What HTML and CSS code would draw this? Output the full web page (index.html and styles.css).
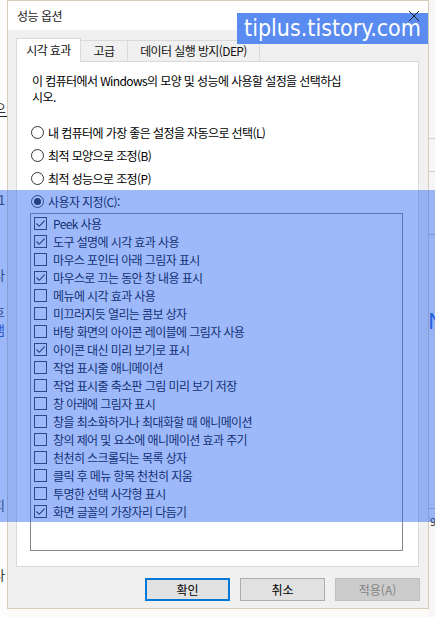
FILE: index.html
```html
<!DOCTYPE html>
<html lang="ko">
<head>
    <meta charset="UTF-8">
    <title>성능 옵션</title>
    <link rel="stylesheet" href="styles.css">
</head>
<body>
    <div class="desk">
        <!-- window behind the dialog, only its edges show -->
        <div class="back back-left">
            <span class="frag frag-a">으</span>
            <span class="frag frag-b">1</span>
            <span class="frag frag-c">사</span>
            <span class="frag frag-d">호</span>
            <span class="frag frag-e">램</span>
            <span class="frag frag-f">지</span>
            <span class="frag frag-g">사</span>
        </div>
        <div class="back back-right">
            <span class="frag frag-n">N</span>
            <span class="frag frag-q">'9</span>
        </div>

        <div class="dialog">
            <div class="titlebar">
                <span class="title">성능 옵션</span>
                <svg class="close" width="12" height="12" viewBox="0 0 12 12">
                    <path d="M1 1 L11 11 M11 1 L1 11" stroke="#222" stroke-width="1" fill="none"/>
                </svg>
            </div>
            <div class="body">
                <div class="tabs">
                    <div class="tab active">시각 효과</div>
                    <div class="tab tab-adv">고급</div>
                    <div class="tab tab-dep">데이터 실행 방지(DEP)</div>
                </div>
                <div class="panel">
                    <p class="desc">이 컴퓨터에서 Windows의 모양 및 성능에 사용할 설정을 선택하십<br>시오.</p>
                    <div class="radios">
                        <div class="radio"><span class="dot"></span>내 컴퓨터에 가장 좋은 설정을 자동으로 선택(L)</div>
                        <div class="radio"><span class="dot"></span>최적 모양으로 조정(B)</div>
                        <div class="radio"><span class="dot"></span>최적 성능으로 조정(P)</div>
                        <div class="radio on"><span class="dot"></span>사용자 지정(C):</div>
                    </div>
                    <div class="listbox" id="list"></div>
                </div>
                <div class="buttons">
                    <button class="btn default">확인</button>
                    <button class="btn">취소</button>
                    <button class="btn disabled">적용(A)</button>
                </div>
            </div>
        </div>

        <div class="watermark">tiplus.tistory.com</div>
        <div class="highlight"></div>
    </div>
    <script>
        const items = [
            ['Peek 사용', true],
            ['도구 설명에 시각 효과 사용', true],
            ['마우스 포인터 아래 그림자 표시', false],
            ['마우스로 끄는 동안 창 내용 표시', true],
            ['메뉴에 시각 효과 사용', false],
            ['미끄러지듯 열리는 콤보 상자', false],
            ['바탕 화면의 아이콘 레이블에 그림자 사용', false],
            ['아이콘 대신 미리 보기로 표시', true],
            ['작업 표시줄 애니메이션', false],
            ['작업 표시줄 축소판 그림 미리 보기 저장', false],
            ['창 아래에 그림자 표시', false],
            ['창을 최소화하거나 최대화할 때 애니메이션', false],
            ['창의 제어 및 요소에 애니메이션 효과 주기', false],
            ['천천히 스크롤되는 목록 상자', false],
            ['클릭 후 메뉴 항목 천천히 지움', false],
            ['투명한 선택 사각형 표시', false],
            ['화면 글꼴의 가장자리 다듬기', true]
        ];

        const tick = '<svg width="11" height="11" viewBox="0 0 11 11"><path d="M1.5 5.5 L4.2 8.3 L9.6 2.6" stroke="#222" stroke-width="1.1" fill="none"/></svg>';
        const list = document.getElementById('list');
        items.forEach(([label, checked]) => {
            const row = document.createElement('div');
            row.className = 'item';
            row.innerHTML = `<span class="box">${checked ? tick : ''}</span><span>${label}</span>`;
            list.appendChild(row);
        });
    </script>
</body>
</html>
```

FILE: styles.css
```css
html, body {
    margin: 0;
    padding: 0;
}
body {
    width: 435px;
    height: 617px;
    overflow: hidden;
    background: #fbfaf7;
    font-family: 'Noto Sans CJK KR', 'Noto Sans', sans-serif;
    font-size: 12px;
    color: #000;
}
.desk {
    position: relative;
    width: 435px;
    height: 617px;
}

/* background window edges */
.back {
    position: absolute;
    top: 0;
    height: 617px;
    overflow: hidden;
}
.back-left {
    left: 0;
    width: 7px;
    background: #fdfdfd;
}
.back-right {
    left: 428px;
    width: 7px;
    background: #f6f6f6;
}
.frag {
    position: absolute;
    font-size: 13px;
    line-height: 16px;
    color: #333;
}
.frag-a { top: 100px; left: -6px; border-bottom: 1px solid #222; padding-right: 4px; }
.frag-b { top: 192px; left: -2px; }
.frag-c { top: 267px; left: -7px; }
.frag-d { top: 304px; left: -7px; }
.frag-e { top: 322px; left: -7px; color: #2a4fb0; }
.frag-f { top: 497px; left: -7px; }
.frag-g { top: 567px; left: -7px; }
.frag-n { top: 306px; left: 0; font-size: 22px; line-height: 26px; color: #1a5fd0; }
.frag-q { top: 513px; left: -1px; font-size: 11px; }
.back-right::before {
    content: '';
    position: absolute;
    left: 0;
    right: 0;
    top: 138px;
    height: 32px;
    border-top: 1px solid #d0d0d0;
    border-bottom: 1px solid #d0d0d0;
}
.back-right::after {
    content: '';
    position: absolute;
    left: 0;
    right: 0;
    top: 234px;
    height: 273px;
    border-top: 1px solid #b8b8b8;
    border-bottom: 1px solid #c8c8c8;
}

/* dialog */
.dialog {
    position: absolute;
    left: 7px;
    top: 0;
    width: 420px;
    height: 607px;
    border: 1px solid #d7cdb9;
    background: #f0f0f0;
    display: flex;
    flex-direction: column;
}
.titlebar {
    height: 29px;
    background: #fff;
    display: flex;
    align-items: center;
    padding-left: 9px;
}
.title {
    font-size: 12px;
    color: #222;
    letter-spacing: -0.5px;
}
.close {
    position: absolute;
    left: 400px;
    top: 9px;
    z-index: 3;
}
.body {
    padding: 8px 8px 7px 8px;
}

.tabs {
    display: flex;
    align-items: flex-end;
    height: 23px;
}
.tab {
    box-sizing: border-box;
    height: 21px;
    line-height: 20px;
    border: 1px solid #d9d9d9;
    border-bottom: none;
    border-left: none;
    background: #f0f0f0;
    text-align: center;
    letter-spacing: -0.6px;
    color: #111;
}
.tab.active {
    width: 65px;
    height: 24px;
    line-height: 22px;
    background: #fff;
    border-left: 1px solid #d9d9d9;
    margin-bottom: -1px;
    position: relative;
    z-index: 1;
}
.tab-adv { width: 47px; }
.tab-dep { width: 132px; }

.panel {
    background: #fff;
    border: 1px solid #d9d9d9;
    padding: 11px 0 0 14px;
    width: 387px;
    height: 493px;
}
.desc {
    margin: 0 0 0 1px;
    line-height: 16px;
    letter-spacing: -0.6px;
}
.radios {
    margin-top: 16px;
}
.radio {
    height: 23px;
    display: flex;
    align-items: center;
    gap: 4px;
    letter-spacing: -0.6px;
}
.dot {
    width: 11px;
    height: 11px;
    border: 1px solid #333;
    border-radius: 50%;
    display: flex;
    align-items: center;
    justify-content: center;
    flex-shrink: 0;
}
.radio.on .dot::after {
    content: '';
    width: 7px;
    height: 7px;
    border-radius: 50%;
    background: #222;
}

.listbox {
    margin-left: -1px;
    width: 371px;
    height: 336px;
    border: 1px solid #828790;
    background: #fff;
}
.item {
    height: 18px;
    display: flex;
    align-items: center;
    gap: 6px;
    padding-left: 3px;
    letter-spacing: -0.6px;
}
.box {
    width: 11px;
    height: 11px;
    border: 1px solid #333;
    flex-shrink: 0;
    display: flex;
}

.buttons {
    display: flex;
    justify-content: flex-end;
    gap: 10px;
    margin-top: 11px;
}
.btn {
    width: 85px;
    height: 23px;
    padding: 0;
    background: #e1e1e1;
    border: 1px solid #adadad;
    font-family: 'Noto Sans CJK KR', 'Noto Sans', sans-serif;
    font-size: 12px;
    color: #000;
}
.btn.default {
    border: 2px solid #0078d7;
}
.btn.disabled {
    background: #cccccc;
    border-color: #bfbfbf;
    color: #838383;
}

/* blog watermark and highlight band over the picture */
.watermark {
    position: absolute;
    left: 237px;
    top: 13px;
    width: 191px;
    height: 31px;
    background: #5a8bf0;
    color: #fff;
    font-family: 'DejaVu Sans Condensed', 'DejaVu Sans', sans-serif;
    font-size: 23px;
    line-height: 30px;
    text-align: center;
    z-index: 2;
}
.highlight {
    position: absolute;
    left: 0;
    top: 190px;
    width: 435px;
    height: 332px;
    background: rgba(40, 100, 245, 0.45);
    z-index: 4;
}
```
